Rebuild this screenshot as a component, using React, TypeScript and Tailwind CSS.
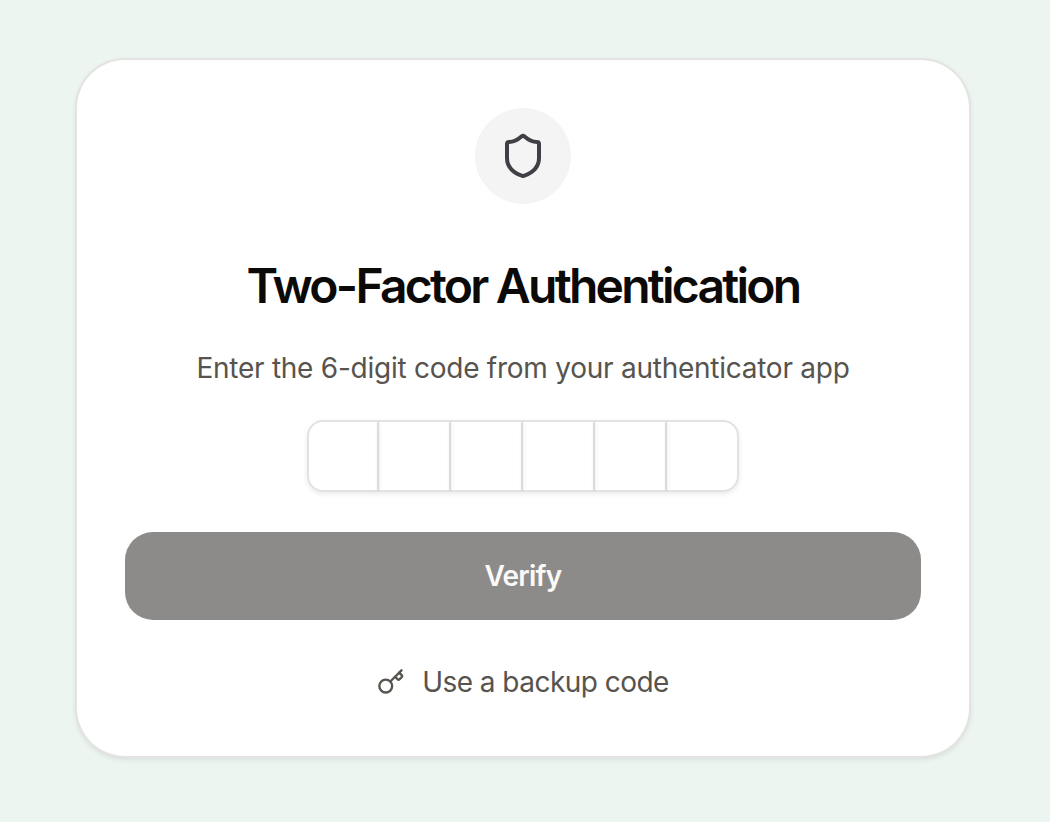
import { Key, Shield } from "lucide-react";

const CODE_LENGTH = 6;

function CodeInput() {
  return (
    <div className="flex items-center">
      {Array.from({ length: CODE_LENGTH }, (_, i) => (
        <div
          key={i}
          className="h-[72px] w-[72px] border-y-2 border-r-2 border-[#e2e2e2] shadow-[0_2px_5px_rgba(0,0,0,0.09)] first:rounded-l-2xl first:border-l-2 last:rounded-r-2xl"
        />
      ))}
    </div>
  );
}

export default function App() {
  return (
    <main className="flex h-[822px] w-[1050px] items-start bg-[#edf5f1] pt-[60px] pl-[77px] font-['Inter',sans-serif]">
      <section className="flex h-[696px] w-[892px] flex-col items-center rounded-[48px] bg-white px-12 pt-12 shadow-[0_0_0_2px_#e3e3e2,0_2px_6px_rgba(0,0,0,0.15)]">
        <div className="flex size-24 shrink-0 items-center justify-center rounded-full bg-[#f4f4f4]">
          <Shield className="size-12 text-[#3f3f46]" />
        </div>
        <h1 className="mt-12 text-5xl leading-[67px] font-semibold tracking-[-2.75px] whitespace-nowrap text-[#0c0a09]">
          Two-Factor Authentication
        </h1>
        <p className="mt-[29px] mb-8 text-[28px] leading-10 tracking-[-0.25px] whitespace-nowrap text-[#57534e]">
          Enter the 6-digit code from your authenticator app
        </p>
        <CodeInput />
        <button className="mt-10 h-[88px] w-full shrink-0 rounded-[28px] bg-[#8d8b89] text-[28px] font-semibold tracking-[-0.75px] text-[#fafaf9]">
          Verify
        </button>
        <button className="mt-10 flex h-11 items-center gap-[17px] text-[28px] tracking-[-0.53px] text-[#57534e]">
          <Key className="size-7" strokeWidth={2} />
          <span className="whitespace-nowrap">Use a backup code</span>
        </button>
      </section>
    </main>
  );
}
